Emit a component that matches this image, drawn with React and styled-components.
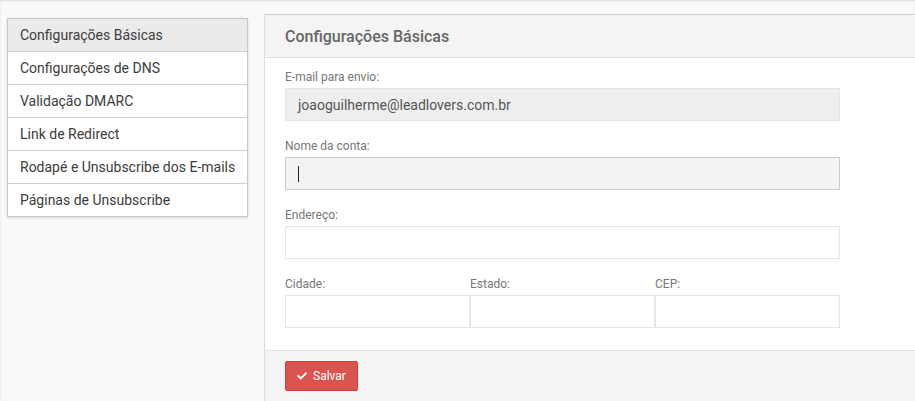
import styled, { createGlobalStyle } from 'styled-components';
import { FaCheck } from 'react-icons/fa';

const GlobalStyle = createGlobalStyle`
  html, body {
    margin: 0;
    padding: 0;
    background: #f9f9f9;
    font-family: Roboto, "Liberation Sans", Arial, sans-serif;
  }
  * { box-sizing: border-box; }
`;

const Page = styled.div`
  display: flex;
  align-items: flex-start;
  min-height: 401px;
  padding-left: 7px;
  gap: 16px;
  box-shadow: inset 0 1px 2px rgba(0, 0, 0, 0.12);
  overflow: hidden;
`;

const Menu = styled.ul`
  list-style: none;
  margin: 18px 0 0;
  padding: 0;
  width: 241px;
  flex-shrink: 0;
  background: #fff;
  border: 1px solid #c8c8c8;
  box-shadow: 0 1px 3px rgba(0, 0, 0, 0.12);
`;

const MenuItem = styled.li`
  height: 33px;
  padding-left: 12px;
  display: flex;
  align-items: center;
  font-size: 14px;
  color: #3c3c3c;
  background: ${p => (p.$active ? '#ebebeb' : '#fff')};
  border-bottom: 1px solid #cfcfcf;
  &:last-child {
    border-bottom: none;
    height: 32px;
  }
`;

const Panel = styled.section`
  flex: 1;
  margin-top: 14px;
  margin-right: -2px;
  background: #fff;
  border-top: 1px solid #cccccc;
  border-left: 1px solid #dcdcdc;
  min-height: 400px;
`;

const PanelHeader = styled.div`
  height: 43px;
  padding-left: 20px;
  display: flex;
  align-items: center;
  background: #f4f4f4;
  border-bottom: 1px solid #e3e3e3;
`;

const Title = styled.h2`
  margin: 0;
  font-size: 16px;
  font-weight: 500;
  color: #666;
`;

const PanelBody = styled.div`
  padding: 12px 20px 22px;
  display: flex;
  flex-direction: column;
  gap: 18px;
`;

const Group = styled.div`
  display: flex;
  flex-direction: column;
  gap: 4px;
`;

const Label = styled.label`
  font-size: 12px;
  line-height: 14px;
  color: #777;
`;

const variants = {
  readonly: 'background: #eeeeee; border-color: #e6e6e6;',
  focus: 'background: #f3f3f3; border-color: #cccccc;',
  normal: 'background: #fff; border-color: #e6e6e6;',
};

const Input = styled.div`
  height: 33px;
  width: ${p => p.$width || '555px'};
  padding-left: 12px;
  display: flex;
  align-items: center;
  font-size: 14px;
  color: #555;
  border: 1px solid;
  ${p => variants[p.$variant || 'normal']}
`;

const Caret = styled.span`
  display: inline-block;
  width: 1px;
  height: 16px;
  background: #222;
`;

const Row = styled.div`
  display: flex;
`;

const PanelFooter = styled.div`
  background: #f4f4f4;
  border-top: 1px solid #e5e5e5;
  padding: 10px 20px;
  min-height: 60px;
`;

const Button = styled.button`
  height: 30px;
  width: 73px;
  display: flex;
  align-items: center;
  justify-content: center;
  gap: 6px;
  background: #d9534f;
  border: 1px solid #d43f3a;
  border-radius: 2px;
  color: #fff;
  font-family: Roboto, "Liberation Sans", Arial, sans-serif;
  font-size: 12px;
  padding: 0;
  svg {
    width: 10px;
    height: 10px;
  }
`;

const menu = [
  'Configurações Básicas',
  'Configurações de DNS',
  'Validação DMARC',
  'Link de Redirect',
  'Rodapé e Unsubscribe dos E-mails',
  'Páginas de Unsubscribe',
];

export default function App() {
  return (
    <>
      <GlobalStyle />
      <Page>
        <Menu>
          {menu.map((m, i) => (
            <MenuItem key={m} $active={i === 0}>
              {m}
            </MenuItem>
          ))}
        </Menu>
        <Panel>
          <PanelHeader>
            <Title>Configurações Básicas</Title>
          </PanelHeader>
          <PanelBody>
            <Group>
              <Label>E-mail para envio:</Label>
              <Input $variant="readonly">joaoguilherme@leadlovers.com.br</Input>
            </Group>
            <Group>
              <Label>Nome da conta:</Label>
              <Input $variant="focus">
                <Caret />
              </Input>
            </Group>
            <Group>
              <Label>Endereço:</Label>
              <Input />
            </Group>
            <Row>
              <Group>
                <Label>Cidade:</Label>
                <Input $width="185px" />
              </Group>
              <Group>
                <Label>Estado:</Label>
                <Input $width="185px" />
              </Group>
              <Group>
                <Label>CEP:</Label>
                <Input $width="185px" />
              </Group>
            </Row>
          </PanelBody>
          <PanelFooter>
            <Button type="button">
              <FaCheck />
              Salvar
            </Button>
          </PanelFooter>
        </Panel>
      </Page>
    </>
  );
}
